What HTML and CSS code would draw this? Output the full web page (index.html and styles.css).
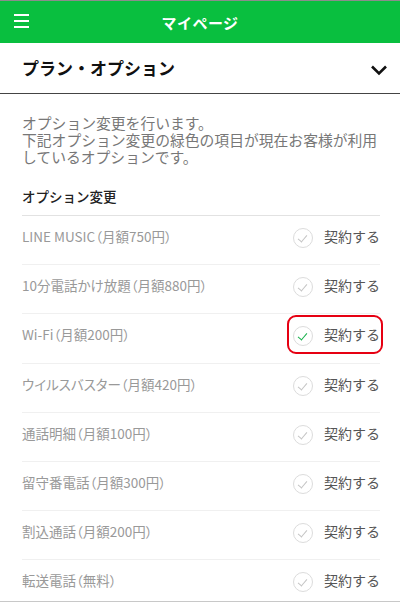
FILE: index.html
```html
<!DOCTYPE html>
<html lang="ja">
<head>
    <meta charset="UTF-8">
    <meta name="viewport" content="width=device-width, initial-scale=1.0">
    <title>マイページ</title>
    <link rel="stylesheet" href="styles.css">
</head>
<body>
    <div class="pantalla">
        <header class="cabecera">
            <span class="menu"><i></i><i></i><i></i></span>
            <h1 class="titulo">マイページ</h1>
        </header>

        <section class="seccion">
            <h2 class="seccion_titulo">プラン・オプション</h2>
            <svg class="flecha" width="18" height="12" viewBox="0 0 18 12">
                <path d="M2 2.5 L9 9.5 L16 2.5" fill="none" stroke="#111" stroke-width="2.6"/>
            </svg>
        </section>

        <div class="contenido">
            <p class="descripcion">オプション変更を行います。<br>下記オプション変更の緑色の項目が現在お客様が利用<br>しているオプションです。</p>

            <h3 class="subtitulo">オプション変更</h3>

            <ul class="lista">
                <li class="fila"><span class="nombre">LINE MUSIC（月額750円）</span><span class="contrato"><span class="check"></span>契約する</span></li>
                <li class="fila"><span class="nombre">10分電話かけ放題（月額880円）</span><span class="contrato"><span class="check"></span>契約する</span></li>
                <li class="fila"><span class="nombre">Wi-Fi（月額200円）</span><span class="contrato activo"><span class="check"></span>契約する</span></li>
                <li class="fila"><span class="nombre">ウイルスバスター（月額420円）</span><span class="contrato"><span class="check"></span>契約する</span></li>
                <li class="fila"><span class="nombre">通話明細（月額100円）</span><span class="contrato"><span class="check"></span>契約する</span></li>
                <li class="fila"><span class="nombre">留守番電話（月額300円）</span><span class="contrato"><span class="check"></span>契約する</span></li>
                <li class="fila"><span class="nombre">割込通話（月額200円）</span><span class="contrato"><span class="check"></span>契約する</span></li>
                <li class="fila"><span class="nombre">転送電話（無料）</span><span class="contrato"><span class="check"></span>契約する</span></li>
            </ul>
        </div>
    </div>
</body>
</html>
```

FILE: styles.css
```css
*{
    margin: 0;
    padding: 0;
    box-sizing: border-box;
}
body{
    width: 400px;
    height: 602px;
    background-color: #fff;
    font-family: "Noto Sans CJK JP", "Noto Sans", sans-serif;
    overflow: hidden;
}
.pantalla{
    height: 602px;
    border-top: 1px solid #8c8c8c;
    border-bottom: 1px solid #c8c8c8;
    overflow: hidden;
}

/*cabecera*/
.cabecera{
    height: 42px;
    background-color: #09bf3f;
    display: flex;
    align-items: center;
    justify-content: center;
    position: relative;
}
.menu{
    position: absolute;
    left: 14px;
    top: 13px;
    display: flex;
    flex-direction: column;
    gap: 4px;
}
.menu i{
    display: block;
    width: 15px;
    height: 2px;
    background-color: #fff;
}
.titulo{
    color: #fff;
    font-size: 15px;
    font-weight: bold;
    letter-spacing: 0.5px;
}

/*seccion*/
.seccion{
    height: 51px;
    border-bottom: 1px solid #444;
    display: flex;
    align-items: center;
    justify-content: space-between;
    padding: 0 12px 2px 22px;
}
.seccion_titulo{
    font-size: 17px;
    font-weight: bold;
    color: #111;
}
.flecha{
    margin-top: 5px;
}

.contenido{
    padding: 0 20px 0 22px;
}
.descripcion{
    margin-top: 20px;
    font-size: 14.8px;
    line-height: 17px;
    color: #777;
    white-space: nowrap;
}
.subtitulo{
    margin-top: 21px;
    padding-bottom: 9px;
    font-size: 13.5px;
    line-height: 20px;
    font-weight: 500;
    color: #222;
    border-bottom: 1px solid #e2e2e2;
}

/*lista*/
.lista{
    list-style: none;
}
.fila{
    height: 49.2px;
    display: flex;
    align-items: center;
    justify-content: space-between;
    border-bottom: 1px solid #f0f0f0;
    padding-bottom: 8px;
}
.nombre{
    font-size: 13.5px;
    color: #999;
    font-feature-settings: "palt";
}
.contrato{
    display: flex;
    align-items: center;
    gap: 11px;
    font-size: 14px;
    color: #555;
    position: relative;
}
.check{
    width: 20px;
    height: 20px;
    border: 1px solid #dcdcdc;
    border-radius: 50%;
    position: relative;
    margin-top: 4px;
}
.check::after{
    content: "";
    position: absolute;
    left: 6px;
    top: 4px;
    width: 4px;
    height: 8px;
    border-right: 1px solid #c4c4c4;
    border-bottom: 1px solid #c4c4c4;
    transform: rotate(40deg);
}
.activo .check::after{
    border-color: #16b04a;
    border-width: 1.5px;
}
.activo::after{
    content: "";
    position: absolute;
    top: -7px;
    bottom: -8px;
    left: -6px;
    right: -3px;
    border: 2.5px solid #e60012;
    border-radius: 9px;
}
```
